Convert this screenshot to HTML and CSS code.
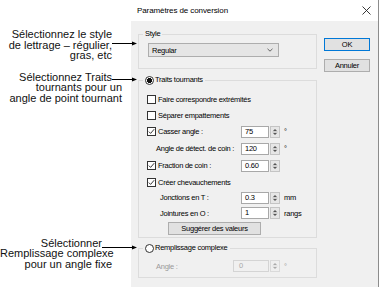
FILE: index.html
```html
<!DOCTYPE html>
<html lang="fr">
<head>
<meta charset="utf-8">
<title>Paramètres de conversion</title>
<link rel="stylesheet" href="styles.css">
</head>
<body>
<div class="page">
  <aside class="notes">
    <p class="note note-1">Sélectionnez le style<br>de lettrage – régulier,<br>gras, etc<span class="arrow arrow-1"><svg width="25" height="5" viewBox="0 0 25 5"><line x1="0" y1="2.5" x2="21" y2="2.5" stroke="#000" stroke-width="1"/><polygon points="20,0.5 25,2.5 20,4.5" fill="#000"/></svg></span></p>
    <p class="note note-2"><span class="lead">Sélectionnez Traits</span><br>tournants pour un<br>angle de point tournant<span class="arrow arrow-2"><svg width="25" height="5" viewBox="0 0 25 5"><line x1="0" y1="2.5" x2="21" y2="2.5" stroke="#000" stroke-width="1"/><polygon points="20,0.5 25,2.5 20,4.5" fill="#000"/></svg></span></p>
    <p class="note note-3"><span class="lead">Sélectionner</span><br>Remplissage complexe<br>pour un angle fixe<span class="arrow arrow-3"><svg width="35" height="5" viewBox="0 0 35 5"><line x1="0" y1="2.5" x2="31" y2="2.5" stroke="#000" stroke-width="1"/><polygon points="30,0.5 35,2.5 30,4.5" fill="#000"/></svg></span></p>
  </aside>

  <section class="dialog">
    <header class="titlebar">
      <span class="title">Paramètres de conversion</span>
      <svg class="close" width="9" height="9" viewBox="0 0 9 9"><path d="M0.5 0.5 L8.5 8.5 M8.5 0.5 L0.5 8.5" stroke="#222" stroke-width="0.9" fill="none"/></svg>
    </header>
    <div class="dlg-body">
      <div class="main">
        <fieldset class="group group-style">
          <legend>Style</legend>
          <div class="select">
            <span>Regular</span>
            <svg width="6" height="4" viewBox="0 0 6 4"><polyline points="0.5,0.8 3,3.2 5.5,0.8" stroke="#555" stroke-width="0.9" fill="none"/></svg>
          </div>
        </fieldset>

        <fieldset class="group group-traits">
          <legend><span class="rb checked"></span>Traits tournants</legend>
          <div class="row row-cb"><span class="cb"></span><span>Faire correspondre extrémités</span></div>
          <div class="row row-cb"><span class="cb"></span><span>Séparer empattements</span></div>
          <div class="row row-in">
            <span class="lbl"><span class="cb"><svg width="7" height="7" viewBox="0 0 7 7"><polyline points="0.8,3.6 2.6,5.4 6.2,1.2" stroke="#222" stroke-width="0.9" fill="none"/></svg></span>Casser angle :</span>
            <span class="inp">75</span><span class="spin"><svg width="8" height="10" viewBox="0 0 8 10"><polygon points="2,4 4,2 6,4" fill="#555"/><line x1="1.5" y1="5" x2="6.5" y2="5" stroke="#999" stroke-width="0.6"/><polygon points="2,6 4,8 6,6" fill="#555"/></svg></span><span class="unit">°</span>
          </div>
          <div class="row row-in">
            <span class="lbl ind-1">Angle de détect. de coin :</span>
            <span class="inp">120</span><span class="spin"><svg width="8" height="10" viewBox="0 0 8 10"><polygon points="2,4 4,2 6,4" fill="#555"/><line x1="1.5" y1="5" x2="6.5" y2="5" stroke="#999" stroke-width="0.6"/><polygon points="2,6 4,8 6,6" fill="#555"/></svg></span><span class="unit">°</span>
          </div>
          <div class="row row-in">
            <span class="lbl"><span class="cb"><svg width="7" height="7" viewBox="0 0 7 7"><polyline points="0.8,3.6 2.6,5.4 6.2,1.2" stroke="#222" stroke-width="0.9" fill="none"/></svg></span>Fraction de coin :</span>
            <span class="inp">0.60</span><span class="spin"><svg width="8" height="10" viewBox="0 0 8 10"><polygon points="2,4 4,2 6,4" fill="#555"/><line x1="1.5" y1="5" x2="6.5" y2="5" stroke="#999" stroke-width="0.6"/><polygon points="2,6 4,8 6,6" fill="#555"/></svg></span>
          </div>
          <div class="row row-cb"><span class="cb"><svg width="7" height="7" viewBox="0 0 7 7"><polyline points="0.8,3.6 2.6,5.4 6.2,1.2" stroke="#222" stroke-width="0.9" fill="none"/></svg></span><span>Créer chevauchements</span></div>
          <div class="row row-in row-t">
            <span class="lbl ind-2">Jonctions en T :</span>
            <span class="inp">0.3</span><span class="spin"><svg width="8" height="10" viewBox="0 0 8 10"><polygon points="2,4 4,2 6,4" fill="#555"/><line x1="1.5" y1="5" x2="6.5" y2="5" stroke="#999" stroke-width="0.6"/><polygon points="2,6 4,8 6,6" fill="#555"/></svg></span><span class="unit">mm</span>
          </div>
          <div class="row row-in row-o">
            <span class="lbl ind-2">Jointures en O :</span>
            <span class="inp">1</span><span class="spin"><svg width="8" height="10" viewBox="0 0 8 10"><polygon points="2,4 4,2 6,4" fill="#555"/><line x1="1.5" y1="5" x2="6.5" y2="5" stroke="#999" stroke-width="0.6"/><polygon points="2,6 4,8 6,6" fill="#555"/></svg></span><span class="unit">rangs</span>
          </div>
          <div class="btn btn-suggest">Suggérer des valeurs</div>
        </fieldset>

        <fieldset class="group group-fill">
          <legend><span class="rb"></span>Remplissage complexe</legend>
          <div class="row row-dis">
            <span class="lbl ind-1 dis">Angle :</span>
            <span class="inp inp-dis">0</span><span class="spin spin-dis"><svg width="8" height="10" viewBox="0 0 8 10"><polygon points="2,4 4,2 6,4" fill="#aaa"/><line x1="1.5" y1="5" x2="6.5" y2="5" stroke="#ccc" stroke-width="0.6"/><polygon points="2,6 4,8 6,6" fill="#aaa"/></svg></span><span class="unit dis">°</span>
          </div>
        </fieldset>
      </div>
      <div class="side">
        <div class="btn btn-ok">OK</div>
        <div class="btn">Annuler</div>
      </div>
    </div>
  </section>
</div>
</body>
</html>
```

FILE: styles.css
```css
* { box-sizing: border-box; }

html, body {
  margin: 0;
  padding: 0;
  background: #fff;
}

body {
  width: 389px;
  height: 302px;
  overflow: hidden;
  font-family: "Liberation Sans", Arial, sans-serif;
}

.page {
  display: flex;
  align-items: flex-start;
}

/* annotations */
.notes {
  width: 131px;
  flex: none;
  position: relative;
  z-index: 2;
  font-size: 11px;
  line-height: 10.5px;
  color: #111;
}

.note {
  margin: 0;
  padding-right: 19px;
  text-align: right;
  white-space: nowrap;
  position: relative;
}

.note-1 { margin-top: 29px; }
.note-2 { margin-top: 11.25px; padding-right: 9px; }
.note-3 { margin-top: 134.5px; }

.note-2 .lead { padding-right: 10px; }
.note-3 .lead { padding-right: 10px; }

.arrow {
  position: absolute;
  left: 112px;
  width: 25px;
  height: 5px;
  line-height: 0;
}

.arrow-1 { top: 12px; }
.arrow-2 { top: 5.5px; }
.arrow-3 { top: 7px; left: 102px; width: 35px; }

/* dialog */
.dialog {
  width: 248px;
  height: 287px;
  flex: none;
  background: #f0f0f0;
  border-right: 1px solid #8c8c8c;
  display: flex;
  flex-direction: column;
  color: #000;
  font-size: 7.5px;
  letter-spacing: -0.25px;
}

.titlebar {
  height: 21px;
  flex: none;
  background: #fff;
  display: flex;
  align-items: center;
  justify-content: space-between;
  padding: 0 7px 0 6px;
}

.title {
  font-size: 8px;
  letter-spacing: -0.1px;
}

.close { display: block; }

.dlg-body {
  flex: 1;
  display: flex;
  align-items: flex-start;
  padding-left: 7px;
}

.main {
  width: 179px;
  flex: none;
  display: flex;
  flex-direction: column;
}

.side {
  width: 46px;
  margin-left: 7px;
  margin-top: 17px;
  display: flex;
  flex-direction: column;
  gap: 8px;
}

/* group boxes */
.group {
  margin: 0;
  min-width: 0;
  border: 1px solid #dcdcdc;
  padding: 0 0 0 8px;
}

.group legend {
  margin-left: -4px;
  padding: 0 2px;
  height: 10px;
  line-height: 10px;
  display: flex;
  align-items: center;
}

.group-style {
  margin-top: 8px;
  padding-top: 4px;
  padding-bottom: 11px;
}

.group-traits {
  margin-top: 6px;
  padding-top: 6px;
  padding-bottom: 2px;
}

.group-fill {
  margin-top: 5px;
  padding-top: 7px;
  padding-bottom: 5px;
}

/* dropdown */
.select {
  margin-left: 1px;
  width: 131px;
  height: 14px;
  background: #e5e5e5;
  border: 1px solid #adadad;
  display: flex;
  align-items: center;
  justify-content: space-between;
  padding: 0 5px 0 3px;
}

.select svg { display: block; }

/* rows */
.row {
  display: flex;
  align-items: center;
}

.row-cb { height: 16px; }
.row-in { height: 17px; }
.row-t { height: 15px; }
.row-o { height: 16px; }
.row-dis { height: 12px; }

.lbl {
  width: 94px;
  flex: none;
  display: flex;
  align-items: center;
}

.group-fill .lbl { width: 86px; }

.ind-1 { padding-left: 9px; }
.ind-2 { padding-left: 13px; }

.dis { color: #9a9a9a; }

/* check / radio */
.cb {
  width: 9px;
  height: 9px;
  flex: none;
  background: #fff;
  border: 1px solid #333;
  margin-right: 2px;
  display: flex;
  align-items: center;
  justify-content: center;
}

.cb svg { display: block; }

.rb {
  width: 9px;
  height: 9px;
  flex: none;
  border-radius: 50%;
  background: #fff;
  border: 1px solid #333;
  margin-right: 1px;
}

.rb.checked {
  background: radial-gradient(circle, #111 0 2.3px, #fff 2.8px);
}

/* spin inputs */
.inp {
  width: 28px;
  height: 12px;
  flex: none;
  background: #fff;
  border: 1px solid #a8a8a8;
  padding-left: 3px;
  line-height: 10px;
}

.inp-dis {
  width: 36px;
  background: #f0f0f0;
  border-color: #d4d4d4;
  color: #a8a8a8;
  padding-left: 5px;
}

.spin {
  width: 10px;
  height: 12px;
  flex: none;
  margin-left: 1px;
  background: #e6e6e6;
  border: 1px solid #c4c4c4;
  display: flex;
  align-items: center;
  justify-content: center;
}

.spin svg { display: block; }

.spin-dis {
  background: #efefef;
  border-color: #dadada;
}

.unit {
  margin-left: 4px;
}

/* buttons */
.btn {
  height: 13px;
  background: #e1e1e1;
  border: 1px solid #adadad;
  display: flex;
  align-items: center;
  justify-content: center;
}

.btn-ok {
  border-color: #0078d7;
}

.btn-suggest {
  width: 93px;
  margin-left: 21px;
  margin-top: 1px;
}
```
